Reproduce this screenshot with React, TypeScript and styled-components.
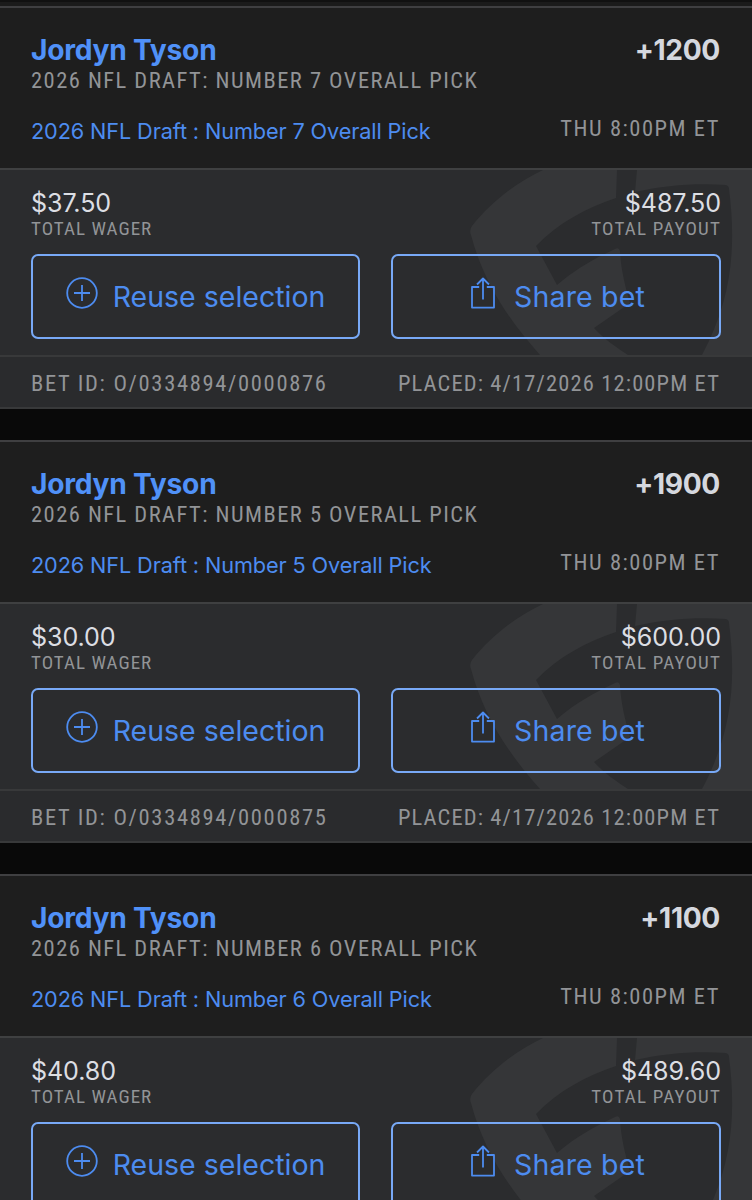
import React from "react";
import styled, { createGlobalStyle } from "styled-components";

const GlobalStyle = createGlobalStyle`
  *, *::before, *::after { box-sizing: border-box; }
  html, body { margin: 0; padding: 0; background: #090909; }
  body {
    height: 1200px;
    overflow: hidden;
    font-family: Inter, sans-serif;
    font-variant-ligatures: none;
  }
`;

const Page = styled.main`
  width: 752px;
  height: 1200px;
  overflow: hidden;
  background: #090909;
`;

const PreviousCardEdge = styled.div`
  height: 6px;
  background: #1b1b1b;
  border-top: 2px solid #111111;
`;

const Card = styled.article`
  margin-bottom: 31px;
  border-top: 2px solid #3f3f41;
  border-bottom: 2px solid #38393a;
  background: #1e1e1e;
`;

const Header = styled.header`
  height: 160px;
  padding: 26px 32px 0 31px;
`;

const Row = styled.div`
  display: flex;
  justify-content: space-between;
`;

const Caps = styled.span<{ $tracking: number }>`
  font-family: Roboto, "Liberation Sans", sans-serif;
  font-stretch: 75%;
  font-weight: 400;
  font-size: 22.5px;
  line-height: 28px;
  letter-spacing: ${(p) => p.$tracking}px;
  white-space: nowrap;
  color: #929497;
`;

const Player = styled.h2`
  margin: 0;
  font-size: 28.2px;
  line-height: 32px;
  font-weight: 700;
  letter-spacing: -0.25px;
  color: #5091f8;
`;

const Odds = styled.span`
  font-size: 28.2px;
  line-height: 32px;
  font-weight: 700;
  letter-spacing: -0.35px;
  color: #d5d8df;
`;

const Market = styled(Caps)`
  display: block;
  line-height: 29px;
`;

const EventRow = styled(Row)`
  margin-top: 19px;
`;

const EventLink = styled.a`
  padding-top: 3px;
  font-size: 21.7px;
  line-height: 28px;
  font-weight: 400;
  letter-spacing: -0.12px;
  color: #4d8cf0;
`;

const Summary = styled.section`
  position: relative;
  height: 187px;
  padding: 18px 31px 0;
  border-top: 2px solid #3f4041;
  background: #2b2c2e;
`;

const Watermark = styled.svg`
  position: absolute;
  top: 0;
  right: 0;
  display: block;
  fill: #353638;
`;

const Amounts = styled(Row)`
  position: relative;
`;

const Amount = styled.div<{ $end?: boolean }>`
  display: flex;
  flex-direction: column;
  align-items: ${(p) => (p.$end ? "flex-end" : "flex-start")};
`;

const Money = styled.span`
  font-size: 25.1px;
  line-height: 30px;
  font-weight: 400;
  letter-spacing: -0.1px;
  color: #dcdee3;
`;

const AmountLabel = styled(Caps)`
  font-size: 19px;
  line-height: 22px;
`;

const Actions = styled.div`
  position: relative;
  display: grid;
  grid-template-columns: 329px 330px;
  gap: 31px;
  margin-top: 14px;
`;

const ActionButton = styled.button<{ $tracking: number }>`
  display: flex;
  align-items: center;
  justify-content: center;
  gap: 15px;
  height: 85px;
  padding: 0;
  border: 2px solid #78a9f6;
  border-radius: 7px;
  background: transparent;
  font-family: inherit;
  font-size: 28.5px;
  font-weight: 400;
  letter-spacing: ${(p) => p.$tracking}px;
  color: #4d8cf0;
`;

const Icon = styled.svg`
  width: 32px;
  height: 32px;
  margin-bottom: 7px;
  fill: none;
  stroke: currentColor;
  stroke-width: 1.8;
`;

const Footer = styled.footer`
  display: flex;
  justify-content: space-between;
  height: 52px;
  padding: 12px 32px 0 31px;
  border-top: 2px solid #38393a;
  background: #2a2b2d;
`;

type Bet = {
  pick: number;
  odds: string;
  wager: string;
  payout: string;
  id: string;
};

const bets: Bet[] = [
  { pick: 7, odds: "+1200", wager: "$37.50", payout: "$487.50", id: "O/0334894/0000876" },
  { pick: 5, odds: "+1900", wager: "$30.00", payout: "$600.00", id: "O/0334894/0000875" },
  { pick: 6, odds: "+1100", wager: "$40.80", payout: "$489.60", id: "O/0334894/0000874" },
];

const ShieldMark = () => (
  <Watermark width="312" height="185" viewBox="0 0 312 185" aria-hidden>
    <path d="M103 0 C77 12 51 32 32 56 Q29 60 31 65 C43 110 66 147 100 185 H188 C176 177 164 169 154 158 L190 133 C185 115 181 100 180 81 Q179 77 175 79 C154 89 137 98 117 115 L96 76 C118 53 146 38 176 28 L177 0 Z" />
    <path d="M197 0 L195 22 C226 15 256 13 286 15 Q289 16 289 19 C296 75 293 127 262 185 H312 V0 Z" />
  </Watermark>
);

const AddIcon = () => (
  <Icon viewBox="0 0 32 32" aria-hidden>
    <circle cx="16" cy="16" r="14.8" />
    <path d="M16 8 V24 M8 16 H24" />
  </Icon>
);

const ShareIcon = () => (
  <Icon viewBox="0 0 32 32" strokeLinejoin="round" aria-hidden>
    <path d="M12.2 10 H5 V30.6 H27 V10 H19.8" />
    <path d="M16 22.5 V1.5 M10 7.5 L16 1.5 L22 7.5" />
  </Icon>
);

const BetCard = ({ bet }: { bet: Bet }) => (
  <Card>
    <Header>
      <Row>
        <Player>Jordyn Tyson</Player>
        <Odds>{bet.odds}</Odds>
      </Row>
      <Market $tracking={1.46}>2026 NFL DRAFT: NUMBER {bet.pick} OVERALL PICK</Market>
      <EventRow>
        <EventLink>2026 NFL Draft : Number {bet.pick} Overall Pick</EventLink>
        <Caps $tracking={1.53}>THU 8:00PM ET</Caps>
      </EventRow>
    </Header>
    <Summary>
      <ShieldMark />
      <Amounts>
        <Amount>
          <Money>{bet.wager}</Money>
          <AmountLabel $tracking={1.02}>TOTAL WAGER</AmountLabel>
        </Amount>
        <Amount $end>
          <Money>{bet.payout}</Money>
          <AmountLabel $tracking={1.2}>TOTAL PAYOUT</AmountLabel>
        </Amount>
      </Amounts>
      <Actions>
        <ActionButton $tracking={0}>
          <AddIcon />
          Reuse selection
        </ActionButton>
        <ActionButton $tracking={0.15}>
          <ShareIcon />
          Share bet
        </ActionButton>
      </Actions>
    </Summary>
    <Footer>
      <Caps $tracking={1.67}>BET ID: {bet.id}</Caps>
      <Caps $tracking={1.13}>PLACED: 4/17/2026 12:00PM ET</Caps>
    </Footer>
  </Card>
);

export default function App() {
  return (
    <>
      <GlobalStyle />
      <Page>
        <PreviousCardEdge />
        {bets.map((bet) => (
          <BetCard key={bet.id} bet={bet} />
        ))}
      </Page>
    </>
  );
}
